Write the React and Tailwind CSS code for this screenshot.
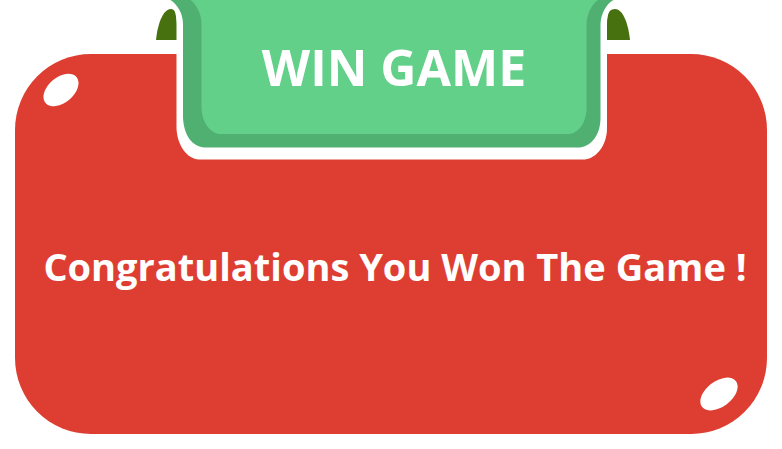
function Highlight({ className, rx, ry, angle }) {
  return (
    <svg className={className} width="40" height="36" viewBox="-20 -18 40 36" aria-hidden="true">
      <ellipse rx={rx} ry={ry} transform={`rotate(${angle})`} fill="#fff" />
    </svg>
  );
}

function RibbonShape() {
  return (
    <svg className="absolute inset-0" width="480" height="160" viewBox="151 0 480 160" aria-hidden="true">
      <path d="M156 40C158 21 164 9 171 9C175 9 177 14 177 25V40Z" fill="#47700f" />
      <path d="M630 40C628 21 622 9 615 9C611 9 607 12 607 20V40Z" fill="#47700f" />
      <path
        d="M169 0C174 4 176.500 14 176.500 24V128C177 145 187 159 199 159.500H585C597 158 607 145 607 128V24C607 14 611 4 616 0Z"
        fill="#fff"
      />
      <path
        d="M170.500 0C178 5 183 14 183 24V118C184 135 192 147 205 147.500H580C592 146 600.500 134 600.500 118V24C601 14 606 4 613.500 0Z"
        fill="#50b072"
      />
      <path
        d="M190.500 0C197 5 201.500 14 201.500 24V108C202 122 209 132 219 134H569C579 133 586.500 122 586.500 108V24C587 14 591 5 598 0Z"
        fill="#62d088"
      />
    </svg>
  );
}

export default function App() {
  return (
    <main className="relative px-[15px] pt-[54px] font-['Open_Sans','Noto_Sans',sans-serif] font-bold text-white">
      <header className="absolute top-0 left-1/2 h-[160px] w-[480px] -translate-x-1/2">
        <RibbonShape />
        <h1 className="relative flex h-[134px] items-center justify-center pl-1.5 text-[50px] leading-none whitespace-nowrap">
          WIN GAME
        </h1>
      </header>
      <section className="relative -z-10 flex min-h-[380px] items-center justify-center rounded-[76px] bg-[#de3e32] pt-11 pl-2">
        <Highlight className="absolute top-[18px] left-[26px]" rx={20.2} ry={12.8} angle={-40} />
        <p className="text-center text-[38px] leading-none whitespace-nowrap">Congratulations You Won The Game !</p>
        <Highlight className="absolute right-[28px] bottom-[22px]" rx={21.3} ry={12.8} angle={-37} />
      </section>
    </main>
  );
}
